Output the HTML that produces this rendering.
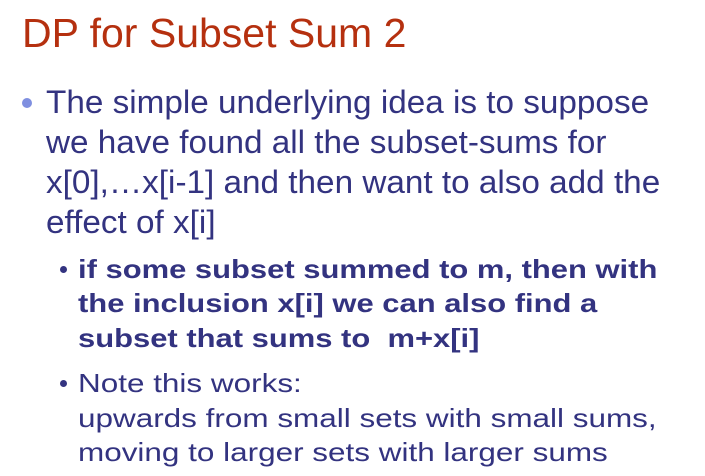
<!DOCTYPE html>
<html><head><style>
html,body{margin:0;padding:0;background:#fff;width:705px;height:476px;overflow:hidden;position:relative;font-family:"Liberation Sans",sans-serif}
.l{position:absolute;white-space:nowrap;line-height:1;transform-origin:0 0}
.t{color:#b5300f;font-size:41px;left:22px;top:13px}
.b{color:#333380;font-size:32px;left:46px;transform:scaleX(1.04)}
.s{color:#333380;font-size:26px;left:78px;transform:scaleX(1.21)}
.bold{font-weight:bold;transform:scaleX(1.19)}
.dot{position:absolute;border-radius:50%}
</style></head><body>
<div class="l t">DP for Subset Sum 2</div>
<div class="dot" style="left:22px;top:98px;width:10px;height:10px;background:#7f8fe0"></div>
<div class="l b" style="top:86px">The simple underlying idea is to suppose</div>
<div class="l b" style="top:126px">we have found all the subset-sums for</div>
<div class="l b" style="top:166px">x[0],…x[i-1] and then want to also add the</div>
<div class="l b" style="top:206px">effect of x[i]</div>
<div class="dot" style="left:60px;top:266px;width:7px;height:7px;background:#333380"></div>
<div class="l s bold" style="top:256px">if some subset summed to m, then with</div>
<div class="l s bold" style="top:290px">the inclusion x[i] we can also find a</div>
<div class="l s bold" style="top:325px">subset that sums to &nbsp;m+x[i]</div>
<div class="dot" style="left:60px;top:380px;width:7px;height:7px;background:#333380"></div>
<div class="l s" style="top:370px">Note this works:</div>
<div class="l s" style="top:405px">upwards from small sets with small sums,</div>
<div class="l s" style="top:439px">moving to larger sets with larger sums</div>
</body></html>
